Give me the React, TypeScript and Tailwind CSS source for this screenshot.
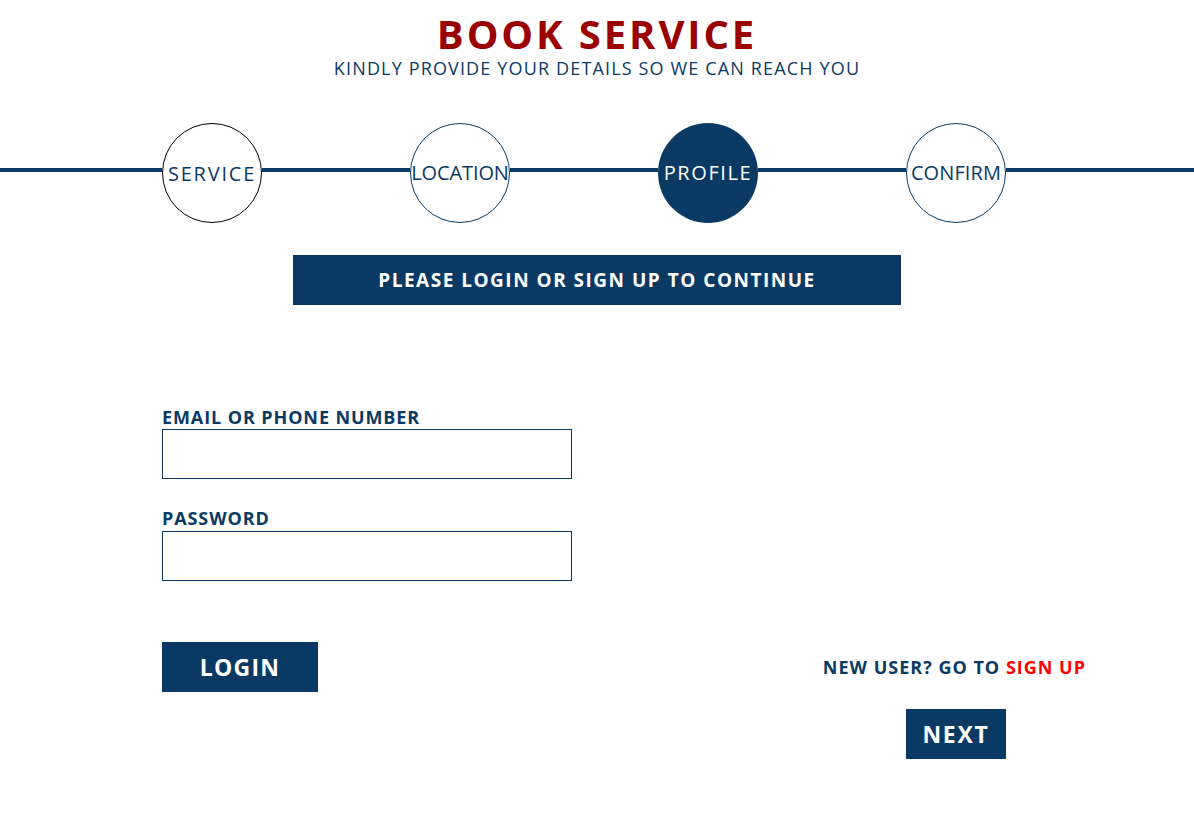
import React from "react"

const steps = [
  { label: "SERVICE", cls: "border border-black text-[#0a3a63] tracking-[1.8px] pt-[2px]" },
  { label: "LOCATION", cls: "border border-[#0a3a63] text-[#0a3a63] tracking-[-0.1px]" },
  { label: "PROFILE", cls: "bg-[#0a3a63] text-white tracking-[1.6px]" },
  { label: "CONFIRM", cls: "border border-[#0a3a63] text-[#0a3a63] tracking-[0.1px]" },
]

function Stepper() {
  return (
    <div className="flex items-start mt-[44px] h-[100px]">
      <div className="w-[162px] h-[4px] mt-[45px] bg-[#0a3a63]" />
      {steps.map((s, i) => (
        <React.Fragment key={s.label}>
          {i > 0 && <div className="w-[148px] h-[4px] mt-[45px] bg-[#0a3a63]" />}
          <div
            className={
              "w-[100px] h-[100px] shrink-0 rounded-full flex items-center justify-center text-[20px] whitespace-nowrap " +
              s.cls
            }
          >
            {s.label}
          </div>
        </React.Fragment>
      ))}
      <div className="flex-1 h-[4px] mt-[45px] bg-[#0a3a63]" />
    </div>
  )
}

export default function App() {
  return (
    <div className="w-[1194px] h-[834px] bg-white font-['Open_Sans',sans-serif] text-[#0a3a63]">
      <div className="flex flex-col items-center pt-[14px]">
        <h1 className="text-[40px] leading-[40px] font-bold tracking-[2.9px] text-[#9b0000]">BOOK SERVICE</h1>
        <p className="text-[18px] leading-[22px] mt-[3px] tracking-[1.15px]">
          KINDLY PROVIDE YOUR DETAILS SO WE CAN REACH YOU
        </p>
      </div>

      <Stepper />

      <div className="flex justify-center mt-[32px]">
        <div className="w-[608px] h-[50px] bg-[#0a3a63] text-white font-bold text-[19px] tracking-[1.5px] flex items-center justify-center">
          PLEASE LOGIN OR SIGN UP TO CONTINUE
        </div>
      </div>

      <div className="pl-[162px] pr-[108px] mt-[100px]">
        <label className="block font-bold text-[18px] leading-[24px] tracking-[0.9px]">EMAIL OR PHONE NUMBER</label>
        <input className="block w-[410px] h-[50px] border border-[#0a3a63] outline-none px-3" />
        <label className="block font-bold text-[18px] leading-[26px] tracking-[0.9px] mt-[26px]">PASSWORD</label>
        <input type="password" className="block w-[410px] h-[50px] border border-[#0a3a63] outline-none px-3" />

        <div className="flex justify-between items-center mt-[61px]">
          <button className="w-[156px] h-[50px] bg-[#0a3a63] text-white font-bold text-[23px] tracking-[1.2px]">
            LOGIN
          </button>
          <div className="font-bold text-[18px] tracking-[1px]">
            NEW USER? GO TO <span className="text-[#ff0000]">SIGN UP</span>
          </div>
        </div>
        <div className="flex justify-end pr-[80px] mt-[17px]">
          <button className="w-[100px] h-[50px] bg-[#0a3a63] text-white font-bold text-[23px] tracking-[1.75px]">
            NEXT
          </button>
        </div>
      </div>
    </div>
  )
}
